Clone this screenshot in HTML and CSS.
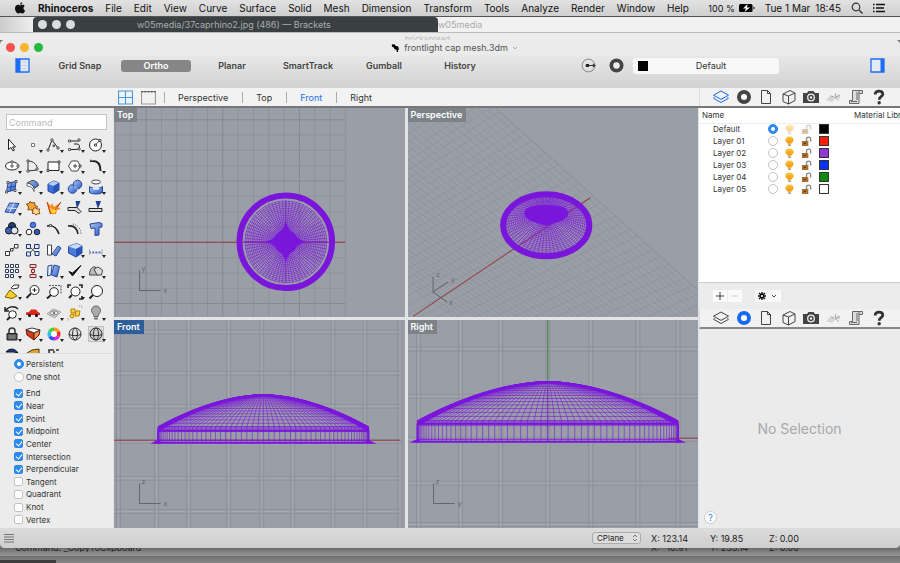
FILE: index.html
```html
<!DOCTYPE html>
<html lang="en">
<head>
<meta charset="UTF-8">
<meta name="viewport" content="width=device-width, initial-scale=1.0">
<title>frontlight cap mesh.3dm</title>
<link rel="stylesheet" href="styles.css">
</head>
<body>
<!-- shared gradients and the panel icons used twice -->
<svg class="defs" aria-hidden="true">
  <defs>
    <linearGradient id="blue" x1="0" y1="0" x2="1" y2="1"><stop offset="0" stop-color="#a9c6f5"/><stop offset="1" stop-color="#2c5bc4"/></linearGradient>
    <linearGradient id="gold" x1="0" y1="0" x2="0" y2="1"><stop offset="0" stop-color="#ffc53d"/><stop offset="1" stop-color="#f0960e"/></linearGradient>
  </defs>
  <symbol id="i-layers" viewBox="0 0 16 16"><path d="M8 2l7.500 4.200L8 10.400.500 6.200zM1.500 8.300L.500 9.300 8 13.500l7.500-4.200-1-1" fill="none" stroke="currentColor"/></symbol>
  <symbol id="i-ring" viewBox="0 0 16 16"><circle cx="8" cy="8" r="5" fill="#fff" stroke="currentColor" stroke-width="4"/></symbol>
  <symbol id="i-page" viewBox="0 0 16 16"><path d="M3.500 1.500h6l3 3v10h-9zM9.500 1.500v3h3" fill="none" stroke="currentColor"/></symbol>
  <symbol id="i-box" viewBox="0 0 16 16"><path d="M2 5l7-3.500L14 4v7.500L7.500 15 2 12.500zM2 5l5.500 2L14 4M7.500 7v8" fill="none" stroke="currentColor"/></symbol>
  <symbol id="i-camera" viewBox="0 0 16 16"><path d="M0 4h4l1.500-2h5L12 4h4v10H0z" fill="currentColor"/><circle cx="8" cy="8.500" r="3.300" fill="currentColor" stroke="#eee" stroke-width="1.300"/><circle cx="8" cy="8.500" r="1.200" fill="#eee"/></symbol>
  <symbol id="i-sun" viewBox="0 0 16 16"><path d="M0 11l5-5 5 3-4 4z" fill="#d6d6d6"/><path d="M9 8l5-2M9 8.500l4 3M9 7l1-3M9 8h5M8 8l-3-1" stroke="#999" stroke-width=".8" fill="none"/></symbol>
  <symbol id="i-scroll" viewBox="0 0 16 16"><path d="M4.500 1.500v10h-3v3h9.500v-10h3.500v-3zM11 4.500v-3M3 12.500h6M9 3v8" fill="#ddd" stroke="#666"/></symbol>
  <symbol id="i-help" viewBox="0 0 16 16"><path d="M4.200 5.500C4 1 11.800 1 11.800 5 11.800 8 8.200 7.500 8.200 10.800" fill="none" stroke="#333" stroke-width="2.800"/><circle cx="8.200" cy="13.800" r="1.700" fill="#333"/></symbol>
  <symbol id="i-bulb" viewBox="0 0 12 12"><path d="M6 .500a4.500 4.500 0 0 0-4.500 4C1.500 6.500 4 7 4 8.500h4C8 7 10.500 6.500 10.500 4.500a4.500 4.500 0 0 0-4.500-4z" fill="url(#gold)"/><path d="M4.500 9h3v2h-3z" fill="#b59a70"/></symbol>
  <symbol id="i-unlock" viewBox="0 0 12 12"><path d="M1 5.500h7V11H1z" fill="#a8702a"/><path d="M6 5.500V3.500a2 2 0 0 1 4.500 0V6" fill="none" stroke="#888" stroke-width="1.500"/><path d="M3 8h2.500" stroke="#4b3010"/></symbol>
</svg>

<div class="desktop">
  <nav class="menubar">
    <svg class="apple" viewBox="0 0 12 12"><path d="M8.300.300c0 1.500-1 2.500-2.300 2.500C5.900 1.500 7 .500 8.300.300zM6.200 3.400c.7 0 1.400-.6 2.400-.6.8 0 1.700.4 2.200 1.200-1.900 1.200-1.600 3.700.4 4.500-.5 1.400-1.500 3-2.600 3-.8 0-1.100-.5-2.200-.5-1 0-1.400.5-2.200.5C2.700 11.500 1 8.800 1 6.300c0-2.300 1.500-3.500 2.900-3.500.9 0 1.700.6 2.300.6z"/></svg>
    <button class="app">Rhinoceros</button>
    <button>File</button>
    <button>Edit</button>
    <button>View</button>
    <button>Curve</button>
    <button>Surface</button>
    <button>Solid</button>
    <button>Mesh</button>
    <button>Dimension</button>
    <button>Transform</button>
    <button>Tools</button>
    <button>Analyze</button>
    <button>Render</button>
    <button>Window</button>
    <button>Help</button>
    <div class="menu-extras">
      <span class="percent">100 %</span>
      <svg class="battery" viewBox="0 0 16 10"><rect x="0" y="1" width="13.500" height="8" rx="1.500"/><path d="M14.500 3.500v3l1.500-1.500z"/><path d="M8.500 1L4 5.500h3L5.500 9 11 4.500H8z" fill="#fff"/></svg>
      <span>Tue 1 Mar</span>
      <span class="clock">18:45</span>
      <button aria-label="Search"><svg class="ico12" viewBox="0 0 12 12"><circle cx="5" cy="5" r="3.800" fill="none" stroke="#333" stroke-width="1.200"/><path d="M8 8l3.500 3.500" stroke="#333" stroke-width="1.400"/></svg></button>
      <button aria-label="Notifications"><svg class="ico12" viewBox="0 0 12 12"><path d="M0 2.500h1.500M3 2.500h9M0 6h1.500M3 6h8M0 9.500h1.500M3 9.500h9" stroke="#111" stroke-width="1.500"/></svg></button>
    </div>
  </nav>

  <div class="behind">
    <div class="behind-left"></div>
    <div class="brackets">
      <i></i><i></i><i></i>
      <span>w05media/37caprhino2.jpg (486) — Brackets</span>
    </div>
    <div class="finder">w05media</div>
  </div>
  <div class="behind-title"><span>brickspread</span></div>

  <div class="window">
    <header class="titlebar">
      <div class="lights">
        <button class="close" aria-label="Close"></button>
        <button class="mini" aria-label="Minimise"></button>
        <button class="full" aria-label="Full screen"></button>
      </div>
      <div class="doc">
        <svg class="rhino" viewBox="0 0 10 10"><path d="M1 1l2 1 1-1 1 2 3 1 1 4-1.500-1L8 10H6.500L6 7.500 4 7 3 5 1 4z"/></svg>
        frontlight cap mesh.3dm
        <svg class="caret" viewBox="0 0 6 6"><path d="M1 2l2 2 2-2" fill="none" stroke="#aaa"/></svg>
      </div>
    </header>

    <div class="toolbar">
      <button aria-label="Left sidebar"><svg class="side" viewBox="0 0 15 15"><path d="M1 1h13v13H1z" fill="#e4eaf5" stroke="#1d6df2" stroke-width="1.300"/><path d="M1 1h4.500v13H1z" fill="#1d6df2"/><path d="M7 4h5M7 7.500h5M7 11h5" stroke="#c3cde0"/></svg></button>
      <div class="snaps">
        <button>Grid Snap</button>
        <button class="on">Ortho</button>
        <button>Planar</button>
        <button>SmartTrack</button>
        <button>Gumball</button>
        <button>History</button>
      </div>
      <div class="current">
        <button aria-label="Record"><svg class="ico14" viewBox="0 0 14 14"><circle cx="7" cy="7" r="6" fill="none" stroke="#777" stroke-width=".8"/><path d="M4.500 5.500h3v3h-3z" fill="#222"/><path d="M7 7h6.500M11 5.500L13 7l-2 1.500" stroke="#333" fill="none"/></svg></button>
        <button aria-label="Properties"><svg class="ico14" viewBox="0 0 14 14"><circle cx="7" cy="7" r="4.800" fill="#eee" stroke="#444" stroke-width="3.500"/></svg></button>
        <button class="layer-pick"><i></i><span>Default</span></button>
      </div>
      <button aria-label="Right sidebar"><svg class="side" viewBox="0 0 15 15"><path d="M1 1h13v13H1z" fill="#e4eaf5" stroke="#1d6df2" stroke-width="1.300"/><path d="M10.500 1H14v13h-3.500z" fill="#1d6df2"/></svg></button>
    </div>

    <div class="tabrow">
      <div class="view-tabs">
        <button aria-label="Four views"><svg class="ico14" viewBox="0 0 14 14"><path d="M.500 1h13v12H.500zM7 1v12M.500 7h13" fill="#eef5fc" stroke="#4b95dd"/></svg></button>
        <button aria-label="Single view"><svg class="ico14" viewBox="0 0 14 14"><path d="M.500 1.500v11.500h13V1.500z" fill="#f1f1f1" stroke="#999"/><path d="M0 1.500h14" stroke="#555" stroke-dasharray="2 1"/></svg></button>
        <button class="tab">Perspective</button>
        <button class="tab">Top</button>
        <button class="tab active">Front</button>
        <button class="tab">Right</button>
      </div>
      <div class="panel-tabs">
        <button class="active" aria-label="Layers"><svg><use href="#i-layers"/></svg></button>
        <button aria-label="Properties"><svg><use href="#i-ring"/></svg></button>
        <button aria-label="Notes"><svg><use href="#i-page"/></svg></button>
        <button aria-label="Display"><svg><use href="#i-box"/></svg></button>
        <button aria-label="Views"><svg><use href="#i-camera"/></svg></button>
        <button aria-label="Sun"><svg><use href="#i-sun"/></svg></button>
        <button aria-label="History"><svg><use href="#i-scroll"/></svg></button>
        <button aria-label="Help"><svg><use href="#i-help"/></svg></button>
      </div>
    </div>

    <main class="work">
      <aside class="left">
        <input class="command" type="text" placeholder="Command" aria-label="Command">
        <div class="tools">
          <button aria-label="Select" class="plain"><svg viewBox="0 0 16 16"><path d="M4.500 2v10.500l2.500-2L9 14l1.500-1-2-3h3z" fill="#fff" stroke="#222"/></svg></button>
          <button aria-label="Point"><svg viewBox="0 0 16 16"><path d="M6.500 6.500h3v3h-3z" fill="#fff" stroke="#777"/></svg></button>
          <button aria-label="Polyline"><svg viewBox="0 0 16 16"><path d="M2 13L6 3l6 8" fill="none" stroke="#222"/><path d="M1 12h2v2H1zM5 2h2v2H5zM11 10h2v2h-2zM7 8h1.500v1.500H7z" fill="#fff" stroke="#555"/></svg></button>
          <button aria-label="Curve"><svg viewBox="0 0 16 16"><path d="M3 4h9M3 12.500h6c4 0 5-5 1-5.500H7" fill="none" stroke="#222"/><path d="M1.500 3h2v2h-2zM11 2h2v2h-2zM1.500 11.500h2v2h-2zM11 11h2v2h-2z" fill="#fff" stroke="#555"/></svg></button>
          <button aria-label="Circle"><svg viewBox="0 0 16 16"><circle cx="7.500" cy="8" r="6" fill="#fff" stroke="#222"/><path d="M7.500 8l4-4.500M6.500 7h2v2h-2zM11 2.500h2v2h-2z" fill="#fff" stroke="#555"/></svg></button>

          <button aria-label="Ellipse"><svg viewBox="0 0 16 16"><ellipse cx="8" cy="8" rx="6.500" ry="4" fill="#fff" stroke="#222"/><path d="M7 7h2v2H7zM13 7h2v2h-2zM7 3h2v2H7z" fill="#fff" stroke="#555"/></svg></button>
          <button aria-label="Arc"><svg viewBox="0 0 16 16"><path d="M3 3c6 0 9 4 9.500 8M3 3v10M3 13l9-1" fill="none" stroke="#333"/><path d="M2 2h2v2H2zM2 12h2v2H2zM11 10h2v2h-2z" fill="#fff" stroke="#555"/></svg></button>
          <button aria-label="Rectangle"><svg viewBox="0 0 16 16"><path d="M2 4h11v8.500H2z" fill="#fff" stroke="#222"/><path d="M1 11.500h2v2H1zM12 3h2v2h-2z" fill="#fff" stroke="#444"/></svg></button>
          <button aria-label="Polygon"><svg viewBox="0 0 16 16"><path d="M4.500 3h6l3 5-3 5h-6l-3-5z" fill="#fff" stroke="#444"/><path d="M7 7h2v2H7zM12 7h2v2h-2z" fill="#fff" stroke="#444"/></svg></button>
          <button aria-label="Fillet"><svg viewBox="0 0 16 16"><path d="M2 3h3c5 0 7.500 4 7.500 10" fill="none" stroke="#222" stroke-width="2"/><path d="M1.500 2l4 .500" stroke="#888"/></svg></button>

          <button aria-label="Surface from points"><svg viewBox="0 0 16 16"><path d="M4 4l8-1.500-1 8.500-8.500 2z" fill="url(#blue)" stroke="#27479a"/><path d="M3 2.500h2v2H3zM11 1.500h2v2h-2zM1.500 12h2v2h-2zM10 10.500h2v2h-2z" fill="#fff" stroke="#555"/><path d="M7.500 3.500L6.500 12M3.500 8.500l8-1.500" stroke="#27479a"/></svg></button>
          <button aria-label="Sweep"><svg viewBox="0 0 16 16"><path d="M2 4l5-2.500c4 0 6 2 6.500 5L9 9.500C8.500 6.500 6 4.500 2 4z" fill="url(#blue)" stroke="#444"/><path d="M2 4v3c4 0 6 2 7 5.500v-3" fill="#fff" stroke="#666"/></svg></button>
          <button aria-label="Box"><svg viewBox="0 0 16 16"><path d="M2 5l6-3 5 2v7l-5.500 3.500L2 12z" fill="#3f70d8" stroke="#27479a"/><path d="M2 5l6-3 5 2-5.500 3z" fill="#b5cef8"/><path d="M7.500 7v7L13 11V4z" fill="#2a53b8"/></svg></button>
          <button aria-label="Boolean union"><svg viewBox="0 0 16 16"><circle cx="5.500" cy="10" r="4.300" fill="url(#blue)" stroke="#27479a"/><circle cx="10.500" cy="5.500" r="4.300" fill="url(#blue)" stroke="#27479a"/><path d="M7 7l3 3" stroke="#7da4ee" stroke-width="2"/></svg></button>
          <button aria-label="Project"><svg viewBox="0 0 16 16"><ellipse cx="8" cy="3" rx="4.500" ry="2" fill="#fff" stroke="#444"/><path d="M1.500 7.500c3 2.500 10 2.500 13 0v6c-3 2-10 2-13 0z" fill="url(#blue)" stroke="#27479a"/><ellipse cx="8" cy="9.500" rx="3.500" ry="1.300" fill="#dfeaff"/></svg></button>

          <button aria-label="Mesh plane"><svg viewBox="0 0 16 16"><path d="M5.500 3l9.500.500L10 13l-9-1z" fill="url(#blue)" stroke="#27479a"/><path d="M10 3.200L5.500 12.500M3 8l9.500.500" stroke="#dfeaff"/></svg></button>
          <button aria-label="Join" class="plain"><svg viewBox="0 0 16 16"><path d="M1.500 4L4 3.500 5 1.500 7 3l2.500-.5.5 3 2.500 1-1 2.500H8.500L7.500 11l-2-1.500L3 10l.5-3z" fill="#f2a33a" stroke="#8a4c08"/><path d="M8 9l2-1.500L12 9l2.500 0-.5 2.500 1 2-2.500.5-1.500 1-1.500-1.500-2 0z" fill="#ffd595" stroke="#8a4c08"/></svg></button>
          <button aria-label="Explode" class="plain"><svg viewBox="0 0 16 16"><path d="M1 2l4 4 1-3 2 4 7-5-3 5.500 3 1.500-4 1-1 4H4z" fill="#f08a1c"/><path d="M3.500 6.500L7 10l5-4-3 7H5.500z" fill="#ffd23e"/><path d="M1 2l3.500 12M15 2l-6 8" stroke="#c7351a" fill="none"/></svg></button>
          <button aria-label="Trim" class="plain"><svg viewBox="0 0 16 16"><path d="M8.500 1h5L10 9z" fill="#1c3f9a"/><path d="M1 7.500h9l4 4-2 2-4-3H1z" stroke="#222" fill="#ddd"/></svg></button>
          <button aria-label="Split" class="plain"><svg viewBox="0 0 16 16"><path d="M7.500 1H13l-3 8z" fill="#1c3f9a"/><path d="M1 8.500h13v3H1z" fill="#ddd" stroke="#222"/></svg></button>

          <button aria-label="Boolean"><svg viewBox="0 0 16 16"><circle cx="8" cy="5" r="3.500" fill="#233c78" stroke="#111"/><circle cx="5" cy="9.500" r="3.500" fill="#3d62b8" stroke="#111"/><circle cx="10.500" cy="9.500" r="3.500" fill="#dce6f8" stroke="#111"/></svg></button>
          <button aria-label="Group" class="plain"><svg viewBox="0 0 16 16"><circle cx="8" cy="4" r="2.800" fill="#4b78e0" stroke="#27479a"/><circle cx="4" cy="11" r="2.800" fill="#fff" stroke="#222"/><circle cx="12" cy="11" r="2.800" fill="#2f57bd" stroke="#222"/></svg></button>
          <button aria-label="Extend" class="plain"><svg viewBox="0 0 16 16"><path d="M1 5c7-1 10 2 12 8" fill="none" stroke="#222" stroke-width="1.600"/><path d="M3.500 3.500h2v2h-2z" fill="#fff" stroke="#555"/></svg></button>
          <button aria-label="Offset" class="plain"><svg viewBox="0 0 16 16"><path d="M1 5c6-1 9 2 10 8" fill="none" stroke="#222" stroke-width="1.600"/><path d="M6 3c5 1 8 5 8 11" fill="none" stroke="#444" stroke-dasharray="1 1.500"/></svg></button>
          <button aria-label="Text" class="plain"><svg viewBox="0 0 16 16"><path d="M2 3l9-1.500 3 1V6l-3 .500V14l-4 .500V7l-4 .500z" fill="url(#blue)" stroke="#27479a"/></svg></button>

          <button aria-label="Move" class="plain"><svg viewBox="0 0 16 16"><path d="M4 11l8-7" stroke="#555"/><path d="M1.500 9.500h4v4h-4zM6.500 6.500H9V9H6.500zM10.500 2.500h3.500V6h-3.500z" fill="#fff" stroke="#333"/></svg></button>
          <button aria-label="Copy" class="plain"><svg viewBox="0 0 16 16"><path d="M1.500 2.500h4v4h-4zM9.500 2.500h4.500v4H9.500zM1.500 10h4v4h-4zM10 9.500h4v4h-4z" fill="#dfe8fa" stroke="#1c3470"/><path d="M6 6l4 4M6 10l3-4" stroke="#555"/></svg></button>
          <button aria-label="Rotate" class="plain"><svg viewBox="0 0 16 16"><path d="M1.500 3h4v10h-4z" fill="#fff" stroke="#444"/><path d="M6 12l6-8 3 2-5 8z" fill="url(#blue)" stroke="#27479a"/></svg></button>
          <button aria-label="Orient"><svg viewBox="0 0 16 16"><path d="M1.500 4.500l8-3L15 4v7l-6 4-7.500-4z" fill="#4b7be0" stroke="#27479a"/><path d="M1.500 4.500l8-3L15 4 9 7z" fill="#c8dbfb"/><path d="M9 7v8l6-4V4z" fill="#2a53b8"/></svg></button>
          <button aria-label="Dimension"><svg viewBox="0 0 16 16"><path d="M1 10.500h13" stroke="#5b74c0" stroke-width="2" stroke-dasharray="2 1.200"/><path d="M1.500 7v6M14 7v6" stroke="#aaa"/></svg></button>

          <button aria-label="Array"><svg viewBox="0 0 16 16"><path d="M1.500 1.500h3v3h-3zM6.500 1.500h3v3h-3zM11.500 1.500h3v3h-3zM1.500 6.500h3v3h-3zM6.500 6.500h3v3h-3zM11.500 6.500h3v3h-3zM1.500 11.500h3v3h-3zM6.500 11.500h3v3h-3z" fill="#fff" stroke="#2b3858"/></svg></button>
          <button aria-label="Align"><svg viewBox="0 0 16 16"><path d="M8 1v14" stroke="#8a2c2c"/><path d="M5 1.500h6v3H5zM6.500 6.500h3v3h-3zM5 11.500h6v3H5z" fill="#f4dada" stroke="#8a2c2c"/></svg></button>
          <button aria-label="Mirror"><svg viewBox="0 0 16 16"><path d="M2 3l4-1-1 10-3.500 1z" fill="#dfe8fa" stroke="#27479a"/><path d="M8 2l5.500 1.500L11 14 5.500 12z" fill="url(#blue)" stroke="#27479a"/></svg></button>
          <button aria-label="Check"><svg viewBox="0 0 16 16"><path d="M2 8.500l3.500 4.500L14 2.500 5.500 10z" fill="#111" stroke="#111"/></svg></button>
          <button aria-label="Shell"><svg viewBox="0 0 16 16"><path d="M1.500 12c0-6 3-9 6-8l3 8z" fill="#bbb" stroke="#444"/><path d="M6 6l4-2 4.500 3-1 5H9z" fill="#ddd" stroke="#444"/></svg></button>

          <button aria-label="Render"><svg viewBox="0 0 16 16"><path d="M1 13l5-7 7 6-5 2.500z" fill="#f6cf2f" stroke="#7d5d00"/><path d="M7 4l3-3h5l-1 3-5 1z" fill="#fff" stroke="#333"/></svg></button>
          <button aria-label="Zoom dynamic" class="plain"><svg viewBox="0 0 16 16"><circle cx="9.500" cy="6" r="4.500" fill="#fff" stroke="#222"/><path d="M6 9.500L1.500 14" stroke="#222" stroke-width="2"/><path d="M7.500 6h4M9.500 4v4" stroke="#222"/></svg></button>
          <button aria-label="Zoom window" class="plain"><svg viewBox="0 0 16 16"><path d="M3 1.500h12v9" fill="none" stroke="#555" stroke-dasharray="2 1"/><circle cx="8" cy="8" r="4.300" fill="#fff" stroke="#222"/><path d="M5 11l-4 3.500" stroke="#222" stroke-width="2"/></svg></button>
          <button aria-label="Zoom extents"><svg viewBox="0 0 16 16"><circle cx="8.500" cy="7.500" r="4.500" fill="#fff" stroke="#222"/><path d="M5 11l-3 3" stroke="#222" stroke-width="2"/><path d="M1 4V1h3M12 1h3v3M15 12v3h-3" fill="none" stroke="#222" stroke-width="1.600"/></svg></button>
          <button aria-label="Zoom" class="plain"><svg viewBox="0 0 16 16"><circle cx="9" cy="7" r="5.500" fill="#fff" stroke="#222"/><path d="M5 11l-3.500 3.500" stroke="#222" stroke-width="2"/></svg></button>

          <button aria-label="Undo view"><svg viewBox="0 0 16 16"><circle cx="8.500" cy="9.500" r="3.800" fill="#fff" stroke="#222"/><path d="M6 12l-3 3" stroke="#222" stroke-width="2"/><path d="M2 5c3-4 9-4 12-1M1 2v4h4" fill="none" stroke="#222" stroke-width="1.500"/></svg></button>
          <button aria-label="Named view"><svg viewBox="0 0 16 16"><path d="M1 10V7.500l3-.500 2-2.500h5L13 7l2 1v2z" fill="#d8281e"/><circle cx="4.500" cy="10.500" r="1.500"/><circle cx="11.500" cy="10.500" r="1.500"/></svg></button>
          <button aria-label="CPlane"><svg viewBox="0 0 16 16"><path d="M1 9l6-5 8 3-6 6z" fill="#ccc" stroke="#aaa"/><ellipse cx="8" cy="8" rx="4" ry="2" fill="#eee" stroke="#888"/><circle cx="8" cy="8" r="1.200" fill="#777"/></svg></button>
          <button aria-label="Properties"><svg viewBox="0 0 16 16"><path d="M4 4h4v4H4z" fill="#ffd23e" stroke="#b58200"/><circle cx="5" cy="11" r="2" fill="#ffd23e" stroke="#b58200"/><path d="M9 6h4l-1 5H8z" fill="#ffd23e" stroke="#b58200"/><path d="M12 1h3v3M1 13v2h2" fill="none" stroke="#999" stroke-dasharray="1 1"/></svg></button>
          <button aria-label="Lights"><svg viewBox="0 0 16 16"><path d="M8 1a4.500 4.500 0 0 0-4.500 4.500C3.500 8 6 9 6 11.500h4C10 9 12.500 8 12.500 5.500A4.500 4.500 0 0 0 8 1z" fill="#aaa" stroke="#666"/><path d="M6 12.500h4v2H6z" fill="#777"/></svg></button>

          <button aria-label="Lock"><svg viewBox="0 0 16 16"><path d="M5 8V5a3 3 0 0 1 6 0v3" fill="none" stroke="#333" stroke-width="1.500"/><path d="M3 7.500h10V14H3z" fill="#555" stroke="#222"/><path d="M4.500 10h7M4.500 12h7" stroke="#999"/></svg></button>
          <button aria-label="Shade"><svg viewBox="0 0 16 16"><path d="M1 3.500L9 7v7L2 9z" fill="#d43a1c" stroke="#6f1a08"/><path d="M9 7l6-3-1 5-5 5z" fill="#f0913a" stroke="#6f1a08"/><path d="M1 3.500L7 2l8 2-6 3z" fill="#fff" stroke="#333"/></svg></button>
          <button aria-label="Colours"><svg viewBox="0 0 16 16"><path d="M8 8V1.500a6.500 6.500 0 0 1 5.600 3.200z" fill="#ff9a1f"/><path d="M8 8l5.600-3.300a6.500 6.500 0 0 1 0 6.600z" fill="#f03030"/><path d="M8 8l5.600 3.300A6.500 6.500 0 0 1 8 14.500z" fill="#d92ee0"/><path d="M8 8v6.500a6.500 6.500 0 0 1-5.600-3.200z" fill="#3a4cf0"/><path d="M8 8l-5.600 3.300a6.500 6.500 0 0 1 0-6.600z" fill="#25c3e8"/><path d="M8 8L2.400 4.700A6.500 6.500 0 0 1 8 1.500z" fill="#4bd13a"/><circle cx="8" cy="8" r="3" fill="#fff"/></svg></button>
          <button aria-label="Wireframe sphere" class="plain"><svg viewBox="0 0 16 16"><circle cx="8" cy="8" r="6" fill="#ddd" stroke="#333"/><ellipse cx="8" cy="8" rx="2.500" ry="6" fill="none" stroke="#333"/><path d="M2 8.500c3 1.500 9 1.500 12 0" fill="none" stroke="#333"/></svg></button>
          <button aria-label="Shaded sphere"><svg viewBox="0 0 16 16"><path d="M.500.500h15v15H.500z" fill="#ddd" stroke="#999" stroke-dasharray="1 1"/><circle cx="8" cy="8" r="6" fill="#ccc" stroke="#222"/><ellipse cx="8" cy="8" rx="2.500" ry="6" fill="none" stroke="#333"/><path d="M2 8.500c3 1.500 9 1.500 12 0" fill="none" stroke="#333"/></svg></button>

          <button aria-label="Environment" class="plain"><svg viewBox="0 0 16 16"><path d="M2 5c3-4 9-4 12 1l-4-1z" fill="#1c3f9a" stroke="#111"/></svg></button>
          <button aria-label="Materials" class="plain"><svg viewBox="0 0 16 16"><path d="M2 6l5-3 7-1v6H4z" fill="#e0a83a" stroke="#4e3605"/></svg></button>
          <button aria-label="Options" class="plain"><svg viewBox="0 0 16 16"><path d="M3 8V3h5M10 3h3M8 4v3" fill="none" stroke="#333" stroke-width="1.600"/></svg></button>
        </div>
        <div class="modes">
          <label><input type="radio" name="mode" checked>Persistent</label>
          <label><input type="radio" name="mode">One shot</label>
        </div>
        <div class="osnaps">
          <label><input type="checkbox" checked>End</label>
          <label><input type="checkbox" checked>Near</label>
          <label><input type="checkbox" checked>Point</label>
          <label><input type="checkbox" checked>Midpoint</label>
          <label><input type="checkbox" checked>Center</label>
          <label><input type="checkbox" checked>Intersection</label>
          <label><input type="checkbox" checked>Perpendicular</label>
          <label><input type="checkbox">Tangent</label>
          <label><input type="checkbox">Quadrant</label>
          <label><input type="checkbox">Knot</label>
          <label><input type="checkbox">Vertex</label>
        </div>
      </aside>

      <section class="views">
        <div class="view"><svg id="top" viewBox="0 0 290 209" preserveAspectRatio="xMidYMid slice"></svg><h2>Top</h2></div>
        <div class="view"><svg id="persp" viewBox="0 0 290 209" preserveAspectRatio="xMidYMid slice"></svg><h2>Perspective</h2></div>
        <div class="view"><svg id="front" viewBox="0 0 290 209" preserveAspectRatio="xMidYMid slice"></svg><h2 class="active">Front</h2></div>
        <div class="view"><svg id="right" viewBox="0 0 290 209" preserveAspectRatio="xMidYMid slice"></svg><h2>Right</h2></div>
      </section>

      <aside class="right">
        <div class="layers">
          <table>
            <colgroup><col class="c-name"><col class="c-s"><col class="c-s"><col class="c-m"><col class="c-m"><col class="c-m"><col></colgroup>
            <thead><tr><th>Name</th><th></th><th></th><th></th><th></th><th></th><th>Material Library</th></tr></thead>
            <tbody>
              <tr><td>Default</td><td><input type="radio" name="layer" aria-label="Default" checked></td><td><svg class="dim"><use href="#i-bulb"/></svg></td><td><svg class="dim"><use href="#i-unlock"/></svg></td><td><i class="sw black"></i></td><td></td><td></td></tr>
              <tr><td>Layer 01</td><td><input type="radio" name="layer" aria-label="Layer 01"></td><td><svg><use href="#i-bulb"/></svg></td><td><svg><use href="#i-unlock"/></svg></td><td><i class="sw red"></i></td><td></td><td></td></tr>
              <tr><td>Layer 02</td><td><input type="radio" name="layer" aria-label="Layer 02"></td><td><svg><use href="#i-bulb"/></svg></td><td><svg><use href="#i-unlock"/></svg></td><td><i class="sw purple"></i></td><td></td><td></td></tr>
              <tr><td>Layer 03</td><td><input type="radio" name="layer" aria-label="Layer 03"></td><td><svg><use href="#i-bulb"/></svg></td><td><svg><use href="#i-unlock"/></svg></td><td><i class="sw blue"></i></td><td></td><td></td></tr>
              <tr><td>Layer 04</td><td><input type="radio" name="layer" aria-label="Layer 04"></td><td><svg><use href="#i-bulb"/></svg></td><td><svg><use href="#i-unlock"/></svg></td><td><i class="sw green"></i></td><td></td><td></td></tr>
              <tr><td>Layer 05</td><td><input type="radio" name="layer" aria-label="Layer 05"></td><td><svg><use href="#i-bulb"/></svg></td><td><svg><use href="#i-unlock"/></svg></td><td><i class="sw"></i></td><td></td><td></td></tr>
            </tbody>
          </table>
        </div>
        <div class="layer-actions">
          <div class="pair">
            <button aria-label="Add layer"><svg viewBox="0 0 10 10"><path d="M5 1v8M1 5h8" stroke="#444"/></svg></button>
            <button aria-label="Delete layer"><svg viewBox="0 0 10 10"><path d="M2 5h6" stroke="#ccc"/></svg></button>
          </div>
          <button class="gear" aria-label="Layer options"><svg viewBox="0 0 10 10"><circle cx="5" cy="5" r="2" fill="none" stroke="#111" stroke-width="1.800"/><path d="M5 1v1M5 8v1M1 5h1M8 5h1M2 2l1 1M7 7l1 1M8 2L7 3M3 7L2 8" stroke="#111" stroke-width="1.300"/></svg><svg viewBox="0 0 10 10"><path d="M3 4l2 2 2-2" stroke="#444" fill="none"/></svg></button>
        </div>
        <div class="panel-tabs second">
          <button aria-label="Layers"><svg><use href="#i-layers"/></svg></button>
          <button class="active" aria-label="Properties"><svg><use href="#i-ring"/></svg></button>
          <button aria-label="Notes"><svg><use href="#i-page"/></svg></button>
          <button aria-label="Display"><svg><use href="#i-box"/></svg></button>
          <button aria-label="Views"><svg><use href="#i-camera"/></svg></button>
          <button aria-label="Sun"><svg><use href="#i-sun"/></svg></button>
          <button aria-label="History"><svg><use href="#i-scroll"/></svg></button>
          <button aria-label="Help"><svg><use href="#i-help"/></svg></button>
        </div>
        <div class="selection">
          <p>No Selection</p>
          <button class="help">?</button>
        </div>
      </aside>
    </main>

    <footer class="status">
      <button aria-label="Show command history"><svg class="lines" viewBox="0 0 10 10"><path d="M0 1.500h10M0 4h10M0 6.500h10M0 9h10" stroke="#777"/></svg></button>
      <div class="cplane">
        <select aria-label="Coordinates"><option>CPlane</option><option>World</option></select>
        <svg viewBox="0 0 6 8"><path d="M1 3l2-2 2 2M1 5l2 2 2-2" fill="none" stroke="#777"/></svg>
      </div>
      <span>X: 123.14</span>
      <span>Y: 19.85</span>
      <span>Z: 0.00</span>
    </footer>
  </div>

  <div class="under">
    <div class="under-text">
      <span class="last">Command: _CopyToClipboard</span>
      <span>X: -10.91</span>
      <span>Y: 233.14</span>
      <span>Z: 0.00</span>
    </div>
    <div class="under-edge"></div>
  </div>
</div>
<script src="script.js"></script>
</body>
</html>
```
FILE: styles.css
```css
* {
  box-sizing: border-box;
}
body {
  margin: 0;
  font-family: Inter, "Liberation Sans", sans-serif;
  font-size: 9px;
  color: #333;
  background: #777;
}
button, input, select {
  font: inherit;
  color: inherit;
}
button {
  display: flex;
  align-items: center;
  justify-content: center;
  margin: 0;
  padding: 0;
  border: 0;
  background: none;
  white-space: nowrap;
}
.defs {
  position: absolute;
  width: 0;
  height: 0;
}
.desktop {
  display: flex;
  flex-direction: column;
  height: 100vh;
  overflow: hidden;
}

/* system menu bar */
.menubar {
  display: flex;
  align-items: center;
  gap: 12px;
  height: 17px;
  padding: 0 15px 0 14px;
  font-size: 10px;
  color: #111;
  background: linear-gradient(#e2e2e2, #cfcfcf);
  border-bottom: 1px solid #555;
}
.apple {
  width: 12px;
  height: 12px;
  fill: #111;
}
.menubar .app {
  font-weight: 700;
}
.menu-extras {
  display: flex;
  align-items: center;
  gap: 10px;
  margin-left: auto;
  white-space: nowrap;
}
.percent {
  font-size: 9px;
  margin-right: -6px;
}
.battery {
  width: 16px;
  height: 10px;
}
.clock {
  margin-left: -5px;
}
.ico12 {
  width: 12px;
  height: 12px;
}
.ico14 {
  width: 15px;
  height: 15px;
}

/* windows stacked behind */
.behind {
  display: flex;
  height: 15px;
  background: #f1f1f1;
}
.behind-left {
  width: 33px;
  background: linear-gradient(90deg, #ccc, #eee);
}
.brackets {
  display: flex;
  align-items: center;
  gap: 5px;
  width: 405px;
  padding-left: 5px;
  color: #a9adaf;
  background: #3a3f42;
  border-radius: 4px 4px 0 0;
}
.brackets i {
  width: 9px;
  height: 9px;
  border-radius: 50%;
  background: #dcdcdc;
}
.brackets span {
  margin-left: 57px;
}
.finder {
  padding-top: 2px;
  color: #aaa;
}
.behind-title {
  height: 8px;
  overflow: hidden;
  padding-left: 45%;
  font-size: 8px;
  color: #bbb;
  line-height: 12px;
  background: #ececec;
  border-top: 1px solid #bbb;
}

/* main window */
.window {
  display: flex;
  flex-direction: column;
  flex: 1;
  min-height: 0;
  border-radius: 5px;
  overflow: hidden;
  background: #ececec;
}
.titlebar {
  display: flex;
  align-items: center;
  height: 15px;
  padding: 0 34px 0 6px;
  background: #ebebeb;
}
.lights {
  display: flex;
  gap: 5px;
}
.lights button {
  width: 9px;
  height: 9px;
  border-radius: 50%;
}
.close {
  background: #f4504c;
}
.mini {
  background: #f5b52e;
}
.full {
  background: #22bb3d;
}
.doc {
  display: flex;
  align-items: center;
  gap: 4px;
  margin: 0 auto;
  color: #555;
}
.caret {
  width: 6px;
  height: 6px;
}
.rhino {
  width: 9px;
  height: 9px;
}
.toolbar {
  display: flex;
  align-items: center;
  height: 33px;
  padding: 0 15px 12px;
  background: linear-gradient(#e8e8e8, #d2d2d2);
}
.side {
  width: 15px;
  height: 15px;
}
.snaps {
  display: grid;
  grid-template-columns: repeat(6, 76px);
  margin-left: 12px;
}
.snaps button {
  height: 12px;
  margin: 0 3px;
  border-radius: 3px;
  font-weight: 600;
  color: #444;
}
.snaps .on {
  color: #fff;
  background: #868686;
}
.current {
  display: flex;
  align-items: center;
  gap: 13px;
  margin: 0 91px 0 auto;
}
.layer-pick {
  width: 146px;
  height: 16px;
  margin-left: -4px;
  padding: 0 5px;
  border-radius: 3px;
  background: #f8f8f8;
}
.layer-pick i {
  width: 10px;
  height: 10px;
  background: #000;
}
.layer-pick span {
  flex: 1;
}

/* viewport tabs and panel tabs */
.tabrow {
  display: flex;
  justify-content: space-between;
  height: 20px;
  padding-left: 113px;
  background: #f2f2f2;
  border-bottom: 2px solid #777;
}
.view-tabs {
  display: flex;
  align-items: center;
  gap: 8px;
  padding-left: 5px;
}
.tab {
  height: 11px;
  padding: 0 6px 0 13px;
  border-left: 1px solid #aaa;
}
.tab.active {
  color: #1a6ef0;
}
.panel-tabs {
  display: grid;
  grid-template-columns: repeat(8, 1fr);
  width: 201px;
  padding: 0 10px;
  border-left: 1px solid #ddd;
  color: #444;
}
.panel-tabs svg {
  width: 16px;
  height: 16px;
}
.panel-tabs .active {
  color: #1769f0;
}
.panel-tabs.second {
  height: 20px;
  background: #f2f2f2;
  border-bottom: 2px solid #888;
}

/* work area */
.work {
  display: grid;
  grid-template-columns: 113px 1fr 201px;
  flex: 1;
  min-height: 0;
}
.left {
  display: flex;
  flex-direction: column;
  min-height: 0;
  background: #ececec;
}
.command {
  height: 16px;
  margin: 6px 6px 4px;
  padding: 0 2px;
  border: 1px solid #c4c4c4;
  background: #fff;
}
.command::placeholder {
  color: #bbb;
}
.tools {
  display: grid;
  grid-template-columns: repeat(5, 21px);
  grid-auto-rows: 21px;
  height: 220px;
  padding-left: 1px;
  overflow: hidden;
  border-bottom: 1px solid #ddd;
}
.tools button {
  position: relative;
}
.tools svg {
  width: 16px;
  height: 16px;
}
/* fly-out marker */
.tools button::after {
  content: "";
  position: absolute;
  right: 0;
  bottom: 2px;
  border: 2px solid transparent;
  border-top: 3px solid #222;
  border-bottom: 0;
}
.tools .plain::after {
  display: none;
}
.modes, .osnaps {
  display: flex;
  flex-direction: column;
  padding-left: 14px;
}
.modes {
  height: 29px;
  padding-top: 3px;
}
.osnaps {
  flex: 1;
  padding-top: 4px;
  padding-bottom: 2px;
}
.modes label, .osnaps label {
  display: flex;
  align-items: center;
  flex: 1;
  gap: 3px;
  font-size: 8px;
}
input[type="radio"], input[type="checkbox"] {
  appearance: none;
  display: grid;
  place-items: center;
  width: 9px;
  height: 9px;
  margin: 0;
  border: 1px solid #c2c2c2;
  border-radius: 2px;
  background: #fff;
}
input[type="radio"] {
  width: 10px;
  height: 10px;
  border-radius: 50%;
}
.modes input {
  margin-right: -1px;
}
input:checked {
  border-color: #2e86ea;
  background: #2e8bf0;
}
input[type="checkbox"]:checked::after {
  content: "";
  width: 3px;
  height: 5px;
  margin-bottom: 1px;
  border: solid #fff;
  border-width: 0 1px 1px 0;
  transform: rotate(40deg);
}
input[type="radio"]:checked::after {
  content: "";
  width: 4px;
  height: 4px;
  border-radius: 50%;
  background: #fff;
}

/* viewports */
.views {
  display: grid;
  grid-template: 1fr 1fr / 1fr 1fr;
  gap: 3px;
  min-height: 0;
  padding: 0 1px;
  background: #e3e4e6;
}
.view {
  position: relative;
  min-height: 0;
  overflow: hidden;
  background: #9a9fa7;
}
.view svg {
  display: block;
  width: 100%;
  height: 100%;
}
.view h2 {
  position: absolute;
  top: 0;
  left: 0;
  margin: 0;
  padding: 0 4px 0 3px;
  font-size: 9px;
  font-weight: 600;
  line-height: 14px;
  color: #fff;
  background: #7d8288;
}
.view h2.active {
  background: #2f5f9b;
}
.minor {
  stroke: #8e9299;
}
.major {
  stroke: #858990;
}
.glow {
  stroke: #a5a9b1;
}
.axis-x {
  stroke: #943c46;
}
.axis-y {
  stroke: #3c8444;
}
.mesh {
  fill: none;
  stroke: #7a16dc;
  stroke-width: 0.6;
}
.mesh.bold {
  stroke-width: 2;
}
.solid {
  fill: #7a16dc;
}
.gnomon {
  fill: none;
  stroke: #63676c;
}
.gnomon-text {
  fill: #63676c;
  font-size: 7px;
}

/* right column */
.right {
  display: flex;
  flex-direction: column;
  min-width: 0;
  min-height: 0;
}
.layers {
  height: 175px;
  overflow: hidden;
  background: #fff;
  border-bottom: 1px solid #ccc;
}
.layers table {
  width: 100%;
  table-layout: fixed;
  border-collapse: collapse;
  font-size: 8px;
}
.c-name {
  width: 66px;
}
.c-s {
  width: 16px;
}
.c-m {
  width: 18px;
}
.layers th {
  height: 15px;
  padding: 0 0 0 3px;
  font-weight: 400;
  text-align: left;
  white-space: nowrap;
  overflow: hidden;
  border-bottom: 1px solid #eee;
}
.layers td {
  height: 12px;
  padding: 0;
  line-height: 10px;
}
.layers td:first-child {
  padding-left: 14px;
}
.layers td > * {
  display: grid;
  margin: 0 auto;
}
.layers svg {
  width: 11px;
  height: 11px;
}
.layers .dim {
  opacity: 0.4;
}
.sw {
  width: 10px;
  height: 10px;
  border: 1px solid #333;
  background: #fff;
}
.sw.black {
  background: #000;
}
.sw.red {
  background: #f91c08;
}
.sw.purple {
  background: #8f3ad6;
}
.sw.blue {
  background: #0a32f5;
}
.sw.green {
  background: #118a0c;
}
.layer-actions {
  display: flex;
  align-items: center;
  gap: 13px;
  height: 26px;
  padding-left: 14px;
}
.pair {
  display: flex;
  gap: 1px;
}
.pair button, .gear {
  height: 12px;
  padding: 0 2px;
  background: #fafafa;
}
.layer-actions svg {
  width: 10px;
  height: 10px;
}
.gear {
  gap: 2px;
}
.selection {
  display: grid;
  position: relative;
  flex: 1;
  place-items: center;
  background: #ebebeb;
}
.selection p {
  margin: 0;
  font-size: 14px;
  color: #a8a8a8;
}
.help {
  position: absolute;
  left: 5px;
  bottom: 4px;
  width: 13px;
  height: 13px;
  border: 1px solid #ccc;
  border-radius: 50%;
  color: #1a7cf0;
  background: #fff;
}

/* status bar */
.status {
  display: flex;
  align-items: center;
  height: 20px;
  padding: 0 4px;
  color: #222;
  background: linear-gradient(#dcdcdc, #cecece);
}
.lines {
  width: 10px;
  height: 10px;
}
.cplane {
  position: relative;
  margin-left: auto;
  margin-right: 10px;
}
.cplane select {
  appearance: none;
  display: block;
  width: 49px;
  height: 12px;
  padding: 0 4px;
  border: 1px solid #aaa;
  border-radius: 3px;
  font-size: 8px;
  line-height: 10px;
  background: #dedede;
}
.cplane svg {
  position: absolute;
  top: 2px;
  right: 3px;
  width: 6px;
  height: 8px;
}
.status span, .under-text span {
  width: 59px;
}
.status span:last-child, .under-text span:last-child {
  width: 127px;
}

/* shadow and window edge below */
.under {
  height: 15px;
  background: linear-gradient(#6c6c6c, #979797 8px, #666 8px, #747474 9px, #858585);
}
.under-text {
  display: flex;
  align-items: flex-end;
  height: 4px;
  padding: 0 4px 0 15px;
  overflow: hidden;
  line-height: 9px;
  color: #222;
}
.under-text .last {
  width: auto;
  margin-right: auto;
}
.under-edge {
  width: 56px;
  height: 3px;
  margin-top: 8px;
  background: #3d3d3d;
}
```
FILE: script.js
```javascript
const NS = 'http://www.w3.org/2000/svg';

function add(svg, tag, cls, attrs, text) {
  const el = document.createElementNS(NS, tag);
  el.setAttribute('class', cls);
  for (const key in attrs) el.setAttribute(key, attrs[key]);
  if (text) el.textContent = text;
  svg.appendChild(el);
  return el;
}

function path(svg, cls, d) {
  return add(svg, 'path', cls, { d: d });
}

// small axes in the lower left corner
function gnomon(svg, x, y, across, up) {
  path(svg, 'gnomon', `M${x} ${y - 20}V${y}H${x + 21}`);
  add(svg, 'text', 'gnomon-text', { x: x + 2, y: y - 19 }, up);
  add(svg, 'text', 'gnomon-text', { x: x + 24, y: y + 3 }, across);
}

// grid of double lines for the side views
function sideGrid(svg, xs, ys, right) {
  let dark = '', light = '';
  xs.forEach(x => {
    dark += `M${x - 1.5} 0V209M${x + 2.5} 0V209`;
    light += `M${x + 0.5} 0V209`;
  });
  ys.forEach(y => {
    dark += `M0 ${y - 1.5}H${right}M0 ${y + 2.5}H${right}`;
    light += `M0 ${y + 0.5}H${right}`;
  });
  path(svg, 'glow', light);
  path(svg, 'minor', dark);
}

// cap seen from the side: curved top, straight wall, thin flange
function dome(svg, cx, apex, rim, base, R, band) {
  const h = r => apex + (rim - apex) * Math.pow(r / R, 1.8);
  let d = '';
  for (let a = 0; a <= 180; a += 3) {
    const c = Math.cos(a * Math.PI / 180);
    d += `M${cx} ${apex}`;
    for (let r = R / 12; r <= R + 0.1; r += R / 12) {
      d += `L${(cx + r * c).toFixed(1)} ${h(r).toFixed(1)}`;
    }
    d += `V${base}`;
  }
  for (let i = 1; i <= 16; i++) {
    const r = R * i / 16;
    d += `M${cx - r} ${h(r)}H${cx + r}`;
  }
  for (let y = rim; y < rim + band; y += 1.2) d += `M${cx - R} ${y}H${cx + R}`;
  path(svg, 'mesh', d);

  // silhouette, thicker on the shoulders
  let outer = `M${cx - R - 1} ${base}V${rim + 4}`, inner = '';
  for (let i = -20; i <= 20; i++) {
    const r = R * i / 20, y = h(Math.abs(r));
    outer += `L${cx + r} ${y - 0.5}`;
    inner = `L${cx + r * 0.97} ${y + 2 + Math.abs(i) / 16}` + inner;
  }
  outer += `L${cx + R + 1} ${rim + 4}V${base}H${cx + R - 1}V${rim + 4}`;
  path(svg, 'solid', `${outer}${inner}L${cx - R + 1} ${rim + 4}V${base}z`);
  path(svg, 'mesh bold', `M${cx - R} ${rim + band - 2}H${cx + R}M${cx - R - 3} ${base}H${cx + R + 3}`);
  path(svg, 'solid', `M${cx - R - 8} ${base + 1}L${cx - R} ${base - 3}H${cx + R}L${cx + R + 8} ${base + 1}H${cx + R - 2}V${base - 2}H${cx - R + 2}V${base + 1}z`);
}

// Top
const top_ = document.getElementById('top');
let lines = '', bold = '';
for (let i = 0; i <= 15; i++) {
  const x = (231 - i * 15.3).toFixed(1);
  if (i % 5 === 3) bold += `M${x} 0V209`; else lines += `M${x} 0V209`;
}
for (let i = -8; i <= 4; i++) {
  const y = (134.5 + i * 15.3).toFixed(1);
  if (i % 4 === 0) bold += `M0 ${y}H231`; else lines += `M0 ${y}H231`;
}
path(top_, 'minor', lines);
path(top_, 'major', bold);
path(top_, 'axis-x', 'M0 134.5H231');
lines = '';
for (let a = 0; a < 360; a += 5) {
  const c = Math.cos(a * Math.PI / 180), s = Math.sin(a * Math.PI / 180);
  lines += `M171.500 134L${171.5 + 41 * c} ${134 + 41 * s}`;
}
path(top_, 'mesh', lines);
for (let r = 3; r < 42; r += 1.8) add(top_, 'circle', 'mesh', { cx: 171.5, cy: 134, r: r });
add(top_, 'circle', 'mesh', { cx: 171.5, cy: 134, r: 46.2, style: 'stroke-width:6' });
path(top_, 'mesh', 'M130 134H213M171.500 93V175');
path(top_, 'solid', 'M171.500 114C174 123 182 131 191 134C182 137 174 145 171.500 154C169 145 161 137 152 134C161 131 169 123 171.500 114z');
add(top_, 'circle', 'solid', { cx: 171.5, cy: 134, r: 12 });
gnomon(top_, 25.5, 182.5, 'x', 'y');

// Perspective
const persp = document.getElementById('persp');
add(persp, 'clipPath', '', { id: 'ground' }).innerHTML = '<path d="M0 0H87L290 183V209H0z"/>';
const ground = add(persp, 'g', '', { 'clip-path': 'url(#ground)' });
lines = '';
for (let i = 0; i < 40; i++) {
  const x = 87 - i * 9;
  lines += `M${x} 0L${x + 232 + i * 2} 209`;
}
for (let i = 0; i < 50; i++) {
  const y = i * 9 - 20;
  lines += `M0 ${y + 10}L290 ${y - 190 + i * 2}`;
}
path(ground, 'minor', lines).setAttribute('stroke-width', '0.7');
path(persp, 'minor', 'M87 0L290 183');
path(persp, 'axis-x', 'M5 208.500L182 90');
lines = '';
for (let a = 0; a < 360; a += 6) {
  const c = Math.cos(a * Math.PI / 180), s = Math.sin(a * Math.PI / 180);
  lines += `M138 106L${138 + 41 * c} ${117 + 29 * s}`;
}
path(persp, 'mesh', lines);
for (let i = 1; i < 23; i++) {
  const t = i / 23;
  add(persp, 'ellipse', 'mesh', { cx: 138, cy: 106 + 11 * t, rx: 42 * t, ry: 30 * t });
}
add(persp, 'ellipse', 'mesh', { cx: 138, cy: 117.5, rx: 43, ry: 31, style: 'stroke-width:6' });
path(persp, 'solid', 'M118 101C124 96 152 96 158 101C163 107 158 112 148 115L138 118L128 115C118 112 113 107 118 101z');
path(persp, 'gnomon', 'M25 169V184L40 174M25 184L39 194');
add(persp, 'text', 'gnomon-text', { x: 28, y: 169 }, 'z');
add(persp, 'text', 'gnomon-text', { x: 43, y: 174 }, 'y');
add(persp, 'text', 'gnomon-text', { x: 41, y: 197 }, 'x');

// Front
const front = document.getElementById('front');
sideGrid(front, [4, 42, 74, 114, 147, 178, 218, 250, 285], [12, 53, 86, 121, 158, 191], 286);
path(front, 'axis-x', 'M0 120.500H286');
dome(front, 149, 75, 107, 123, 105, 6);
gnomon(front, 25.5, 183.5, 'x', 'z');

// Right
const right = document.getElementById('right');
sideGrid(right, [10, 52, 92, 139, 182, 229, 269], [29, 76, 119, 163, 204], 290);
path(right, 'axis-x', 'M260 118.500H290');
dome(right, 139.5, 62, 101, 122, 130, 5);
path(right, 'axis-y', 'M139.500 0V61');
path(right, 'mesh', 'M139.500 61V122');
gnomon(right, 25.5, 183.5, 'y', 'z');
```
